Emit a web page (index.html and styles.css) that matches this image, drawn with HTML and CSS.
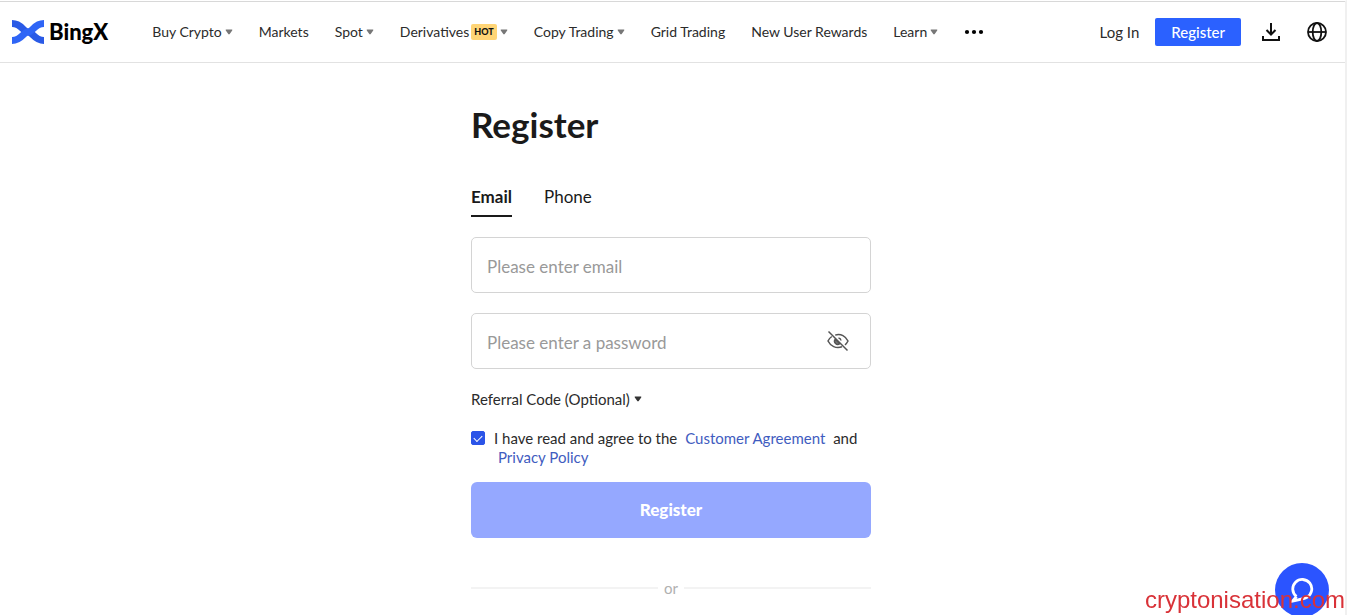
FILE: index.html
```html
<!DOCTYPE html>
<html lang="en">
<head>
    <meta charset="UTF-8">
    <meta name="viewport" content="width=device-width, initial-scale=1.0">
    <title>Register | BingX</title>
    <link rel="stylesheet" href="styles.css">
</head>
<body>
    <svg class="sprite" aria-hidden="true">
        <symbol id="caret" viewBox="0 0 8 6">
            <path d="M1.2 0.6h5.6q1 0 .4.9L4.7 5q-.7.9-1.4 0L.8 1.5q-.6-.9.4-.9z" fill="currentColor"/>
        </symbol>
    </svg>

    <header class="header">
        <a class="logo" href="#">
            <svg class="logo-mark" viewBox="0 0 32 26" aria-hidden="true">
                <path d="M0 4.500C10 4.500 11 13 16 13S22 21.500 32 21.500" fill="none" stroke="#2a5ae6" stroke-width="7"/>
                <path d="M0 21.500C10 21.500 11 13 16 13S22 4.500 32 4.500" fill="none" stroke="#2f65f6" stroke-width="7"/>
            </svg>
            <span>BingX</span>
        </a>

        <nav class="nav">
            <a href="#">Buy Crypto<svg class="caret"><use href="#caret"/></svg></a>
            <a href="#">Markets</a>
            <a href="#">Spot<svg class="caret"><use href="#caret"/></svg></a>
            <a href="#">Derivatives<span class="hot">HOT</span><svg class="caret"><use href="#caret"/></svg></a>
            <a href="#">Copy Trading<svg class="caret"><use href="#caret"/></svg></a>
            <a href="#">Grid Trading</a>
            <a href="#">New User Rewards</a>
            <a href="#">Learn<svg class="caret"><use href="#caret"/></svg></a>
            <button class="icon-btn" type="button" aria-label="More">
                <svg width="20" height="6" viewBox="0 0 20 6">
                    <circle cx="3" cy="3" r="2.1"/><circle cx="10" cy="3" r="2.1"/><circle cx="17" cy="3" r="2.1"/>
                </svg>
            </button>
        </nav>

        <div class="actions">
            <a class="login" href="#">Log In</a>
            <a class="register-link" href="#">Register</a>
            <button class="icon-btn" type="button" aria-label="Download">
                <svg width="20" height="20" viewBox="0 0 20 20" fill="none" stroke="#111" stroke-width="2">
                    <path d="M10 1v11M5.5 8l4.5 4.5L14.5 8M2 14v4h16v-4"/>
                </svg>
            </button>
            <button class="icon-btn" type="button" aria-label="Language">
                <svg width="20" height="20" viewBox="0 0 20 20" fill="none" stroke="#111" stroke-width="1.8">
                    <circle cx="10" cy="10" r="9"/>
                    <ellipse cx="10" cy="10" rx="4.3" ry="9"/>
                    <path d="M1 10h18"/>
                </svg>
            </button>
        </div>
    </header>

    <main class="main">
        <form class="form">
            <h1>Register</h1>

            <div class="tabs">
                <button class="tab active" type="button">Email</button>
                <button class="tab" type="button">Phone</button>
            </div>

            <div class="field">
                <input type="email" id="email" placeholder="Please enter email" aria-label="Email">
            </div>

            <div class="field">
                <input type="password" id="password" placeholder="Please enter a password" aria-label="Password">
                <button class="icon-btn" type="button" aria-label="Show password">
                    <svg width="24" height="24" viewBox="0 0 24 24" fill="none" stroke="#555" stroke-width="1.5">
                        <path d="M9.2 6.1C15 4.200 19.800 7.500 22 12c-.8 1.600-1.800 2.900-3 3.900M16 17.800C10 20 4.500 17 2 12c.9-1.900 2.200-3.400 3.800-4.500"/>
                        <path d="M9.300 10.200a3.200 3.200 0 0 0 4.500 4.500z" fill="#777"/>
                        <path d="M12.500 9a3 3 0 0 1 2.500 2.500M2.500 2.500l19 19"/>
                    </svg>
                </button>
            </div>

            <button class="referral" type="button">Referral Code (Optional)<svg class="caret"><use href="#caret"/></svg></button>

            <div class="agree">
                <input type="checkbox" id="agree" checked>
                <div class="agree-text">
                    <label for="agree">I have read and agree to the</label>
                    <a href="#">Customer Agreement</a>
                    and
                    <a href="#">Privacy Policy</a>
                </div>
            </div>

            <button class="submit" type="submit">Register</button>

            <div class="divider">or</div>
        </form>
    </main>

    <button class="chat" type="button" aria-label="Support chat">
        <svg width="24" height="26" viewBox="0 0 24 26" fill="none" stroke="#fff" stroke-width="2.800">
            <path d="M6.500 19.500A9.500 9.500 0 1 1 17 20.200Q15 21.800 2.500 24.200L6.500 19.500"/>
        </svg>
    </button>
    <div class="watermark">cryptonisation.com</div>
</body>
</html>
```

FILE: styles.css
```css
* {
    box-sizing: border-box;
}

body {
    margin: 0;
    min-height: 100vh;
    border-top: 1px solid #fff;
    border-right: 2px solid #f0f0f0;
    font-family: Lato, "Open Sans", sans-serif;
    font-size: 15px;
    line-height: 20px;
    color: #2b2b2b;
    background-color: #fff;
}

a {
    color: inherit;
    text-decoration: none;
}

button {
    padding: 0;
    border: none;
    background: none;
    font: inherit;
    color: inherit;
    cursor: pointer;
}

.sprite {
    display: none;
}

.caret {
    width: 8px;
    height: 6px;
    margin-left: 3px;
    color: #777;
}

.icon-btn {
    display: flex;
}

/* Header */
.header {
    display: flex;
    align-items: center;
    height: 62px;
    padding: 0 18px 0 12px;
    border-top: 1px solid #d8d8d8;
    border-bottom: 1px solid #e2e2e2;
}

.logo {
    display: flex;
    align-items: center;
    gap: 5px;
    margin-right: 44px;
    font-size: 22px;
    font-weight: 900;
    color: #000;
}

.logo-mark {
    width: 32px;
    height: 26px;
}

.nav {
    display: flex;
    align-items: center;
    gap: 26px;
    font-size: 14px;
    white-space: nowrap;
}

.nav a {
    display: flex;
    align-items: center;
}

.hot {
    margin-left: 2px;
    padding: 0 3px;
    border-radius: 2px;
    background-color: #ffd576;
    font-size: 9px;
    font-weight: 900;
    line-height: 16px;
    color: #111;
}

.actions {
    display: flex;
    align-items: center;
    margin-left: auto;
    white-space: nowrap;
}

.login {
    margin-right: 16px;
}

.register-link {
    padding: 4px 16px;
    border-radius: 2px;
    background-color: #2b61ff;
    font-weight: 500;
    color: #fff;
}

.actions .icon-btn {
    margin-left: 20px;
}

.actions .icon-btn + .icon-btn {
    margin-left: 26px;
}

/* Form */
.main {
    padding: 40px 19px 0 16px;
}

.form {
    display: flex;
    flex-direction: column;
    max-width: 400px;
    margin: 0 auto;
}

h1 {
    margin: 0;
    font-size: 35px;
    line-height: 42px;
    font-weight: 700;
    color: #1a1a1a;
}

.tabs {
    display: flex;
    gap: 32px;
    margin: 42px 0 20px;
}

.tab {
    padding-bottom: 8px;
    border-bottom: 2px solid transparent;
    font-size: 17px;
    color: #1a1a1a;
}

.tab.active {
    border-color: #1a1a1a;
    font-weight: 700;
}

.field {
    display: flex;
    align-items: center;
    height: 56px;
    margin-bottom: 20px;
    padding: 0 20px 0 15px;
    border: 1px solid #d4d4d4;
    border-radius: 5px;
}

.field input {
    flex: 1;
    min-width: 0;
    padding: 3px 0 0;
    border: none;
    outline: none;
    background: none;
    font: inherit;
    font-size: 17px;
    color: #1a1a1a;
}

.field input::placeholder {
    color: #999;
    opacity: 1;
}

.referral {
    display: flex;
    align-items: center;
    align-self: flex-start;
}

.referral .caret {
    margin-left: 4px;
    color: #333;
}

.agree {
    display: flex;
    align-items: flex-start;
    gap: 9px;
    margin: 20px 0 15px;
    line-height: 19px;
}

.agree input {
    display: flex;
    flex: none;
    align-items: center;
    justify-content: center;
    width: 14px;
    height: 14px;
    margin: 2px 0 0;
    border: 1px solid #2b54e8;
    border-radius: 2px;
    appearance: none;
}

.agree input:checked {
    background-color: #2b54e8;
}

.agree input:checked::before {
    content: "";
    width: 7px;
    height: 4px;
    border: solid #fff;
    border-width: 0 0 1px 1px;
    transform: translateY(-1px) rotate(-45deg);
}

.agree a {
    margin: 0 4px;
    color: #3f5cc0;
}

.submit {
    height: 56px;
    border-radius: 6px;
    background-color: #95a8ff;
    font-size: 17px;
    font-weight: 900;
    color: #fff;
}

.divider {
    display: flex;
    align-items: center;
    gap: 6px;
    margin-top: 40px;
    color: #b0b0b0;
}

.divider::before,
.divider::after {
    content: "";
    flex: 1;
    height: 2px;
    background-color: #f3f3f3;
}

/* Floating items */
.chat {
    position: fixed;
    right: 18px;
    bottom: -2px;
    display: flex;
    align-items: center;
    justify-content: center;
    width: 54px;
    height: 54px;
    border-radius: 50%;
    background-color: #2b54ff;
}

.watermark {
    position: fixed;
    right: 2px;
    bottom: 2px;
    font-family: "Liberation Sans", Arial, sans-serif;
    font-size: 24px;
    line-height: 26px;
    color: #d93238;
}
```
